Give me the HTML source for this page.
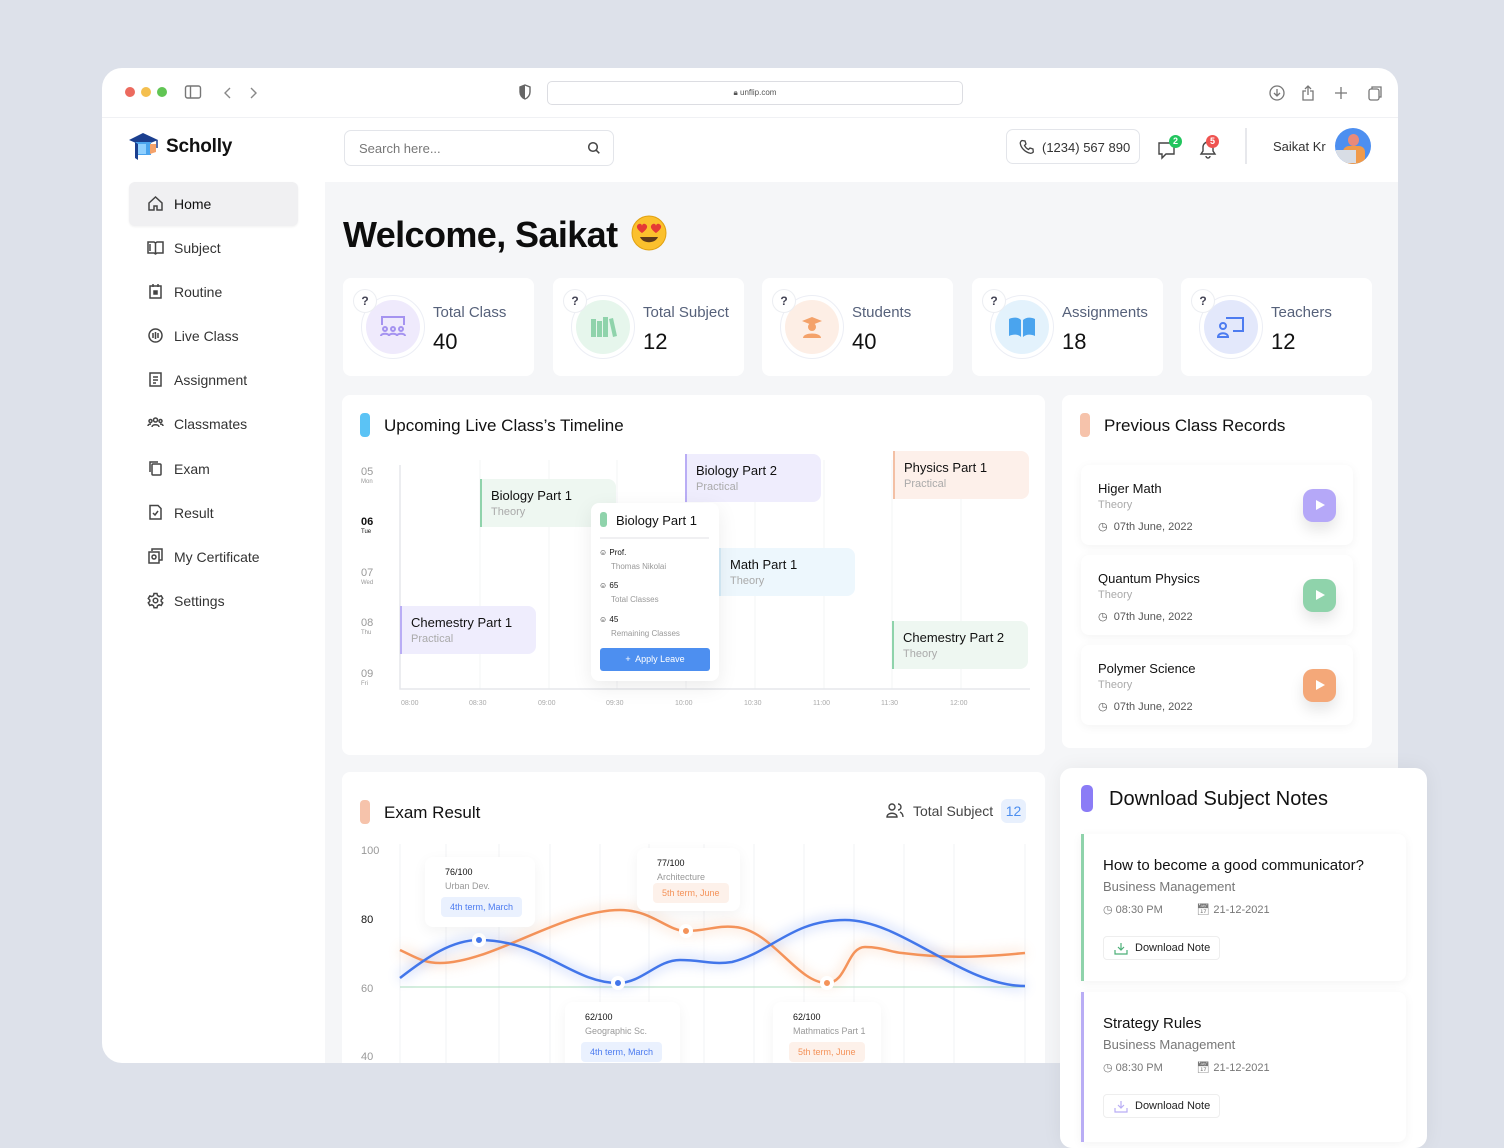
<!DOCTYPE html>
<html><head><meta charset="utf-8"><style>
*{box-sizing:border-box;margin:0;padding:0}
body{width:1504px;height:1128px;background:#dde1ea;font-family:"Liberation Sans",Arial,sans-serif;position:relative;overflow:hidden;color:#111}
.a{position:absolute}
.win{left:102px;top:68px;width:1296px;height:995px;background:#fff;border-radius:20px;overflow:hidden}
.main{left:325px;top:182px;width:1073px;height:881px;background:#f5f6f8}
.card{background:#fff;border-radius:8px}
.nav{position:absolute;left:147px;font-size:14px;color:#333;display:flex;align-items:center;gap:10px}
.nav svg{width:17px;height:17px;fill:none;stroke:#444;stroke-width:1.5}
.stat .q{position:absolute;left:10px;top:11px;width:24px;height:24px;border-radius:50%;background:#fff;border:1px solid #eceef2;font-size:12px;font-weight:bold;color:#445;text-align:center;line-height:22px;z-index:2}
.stat .ring{position:absolute;left:18px;top:17px;width:64px;height:64px;border-radius:50%;border:1px solid #eceef5}
.stat .ic{position:absolute;left:23px;top:22px;width:54px;height:54px;border-radius:50%;display:flex;align-items:center;justify-content:center}
.stat .t{position:absolute;left:90px;top:26px;font-size:15px;color:#56617a}
.stat .n{position:absolute;left:90px;top:51px;font-size:22px;color:#111}
.bar{width:10px;height:24px;border-radius:4px}
.h{font-size:17px;color:#111}
.blk{position:absolute;width:136px;height:48px;border-radius:0 8px 8px 0;padding:9px 0 0 9px;border-left:2px solid}
.blk b{display:block;font-weight:normal;font-size:13px;color:#111}
.blk i{font-style:normal;font-size:11px;color:#aaa;display:block;margin-top:3px}
.tl{font-size:7px;color:#aaa}
.day{position:absolute;left:361px;font-size:11px;color:#999}
.day s{text-decoration:none;display:block;font-size:6px;margin-top:1px}
.rec{position:absolute;left:1081px;width:272px;height:80px;background:#fff;border-radius:8px;box-shadow:0 2px 10px rgba(0,0,0,.05)}
.rec b{position:absolute;left:17px;top:16px;font-size:13px;font-weight:normal;color:#111}
.rec i{position:absolute;left:17px;top:34px;font-style:normal;font-size:11px;color:#aaa}
.rec span{position:absolute;left:17px;top:55px;font-size:11px;color:#555}
.rec .p{position:absolute;left:222px;top:24px;width:33px;height:33px;border-radius:10px;box-shadow:0 8px 14px rgba(0,0,0,.1)}
.rec .p:after{content:"";position:absolute;left:13px;top:11px;border-left:9px solid #fff;border-top:5.5px solid transparent;border-bottom:5.5px solid transparent}
.tip{position:absolute;background:#fff;border-radius:8px;box-shadow:0 4px 14px rgba(0,0,0,.05);font-size:9px}
.tip b{position:absolute;left:20px;top:10px;font-weight:normal;color:#111}
.tip i{position:absolute;left:20px;top:24px;font-style:normal;color:#999}
.tip span{position:absolute;left:16px;padding:5px 9px;border-radius:4px}
.note{position:absolute;left:1081px;width:325px;background:#fff;border-radius:0 8px 8px 0;box-shadow:0 2px 10px rgba(0,0,0,.05);border-left:3px solid}
.note b{position:absolute;left:19px;top:23px;font-size:15px;font-weight:normal;color:#111}
.note i{position:absolute;left:19px;top:45px;font-style:normal;font-size:13px;color:#777}
.note .m{position:absolute;left:19px;top:69px;font-size:11px;color:#777;width:200px}
.note .btn{position:absolute;left:19px;top:102px;width:117px;height:24px;border:1px solid #eee;border-radius:4px;font-size:11px;color:#222;padding:5px 0 0 31px}
</style></head><body>
<div class="a win">
  <div class="a" style="left:23px;top:19px;width:10px;height:10px;border-radius:50%;background:#ec6a5e"></div>
  <div class="a" style="left:39px;top:19px;width:10px;height:10px;border-radius:50%;background:#f4bf4f"></div>
  <div class="a" style="left:55px;top:19px;width:10px;height:10px;border-radius:50%;background:#61c554"></div>
  <svg class="a" style="left:82px;top:16px" width="80" height="18" fill="none" stroke="#777" stroke-width="1.4"><rect x="1.5" y="2" width="15" height="12" rx="2"/><line x1="6.5" y1="2" x2="6.5" y2="14"/><path d="M46 4l-5 5 5 5M67 4l5 5-5 5" stroke="#888"/></svg>
  <svg class="a" style="left:416px;top:16px" width="14" height="16"><path d="M7 1l5 2v5c0 3-2 6-5 7-3-1-5-4-5-7V3z" fill="none" stroke="#666" stroke-width="1.4"/><path d="M7 1v14c-3-1-5-4-5-7V3z" fill="#666"/></svg>
  <div class="a" style="left:445px;top:13px;width:416px;height:24px;border:1.5px solid #dcdde2;border-radius:5px;font-size:8px;color:#555;text-align:center;line-height:21px">🔒︎ unflip.com</div>
  <svg class="a" style="left:1166px;top:16px" width="120" height="18" fill="none" stroke="#777" stroke-width="1.3"><circle cx="9" cy="9" r="7"/><path d="M9 5v7M6 9l3 3 3-3"/><path d="M38 7h-3v9h10V7h-3M40 2v9M37 5l3-3 3 3"/><path d="M73 3v12M67 9h12"/><rect x="101" y="5" width="10" height="11" rx="2"/><path d="M104 5V3h9v10h-2"/></svg>
  <div class="a" style="left:0;top:49px;width:1296px;height:1px;background:#f0f1f4"></div>
  <svg class="a" style="left:26px;top:64px" width="32" height="30"><path d="M1 8L15 1l15 7-15 6z" fill="#1b3f8f"/><rect x="7" y="10" width="16" height="13" fill="#4aa4ee"/><rect x="10" y="12" width="8" height="10" fill="#8fd0ff"/><path d="M7 10v16l3 2V12z" fill="#1b3f8f"/><path d="M29 8v8" stroke="#1b3f8f" stroke-width="1.5"/><path d="M22 12v10l6-2V12z" fill="#f4a26a"/></svg>
  <div class="a" style="left:64px;top:68px;font-size:19px;font-weight:bold;color:#111;letter-spacing:-.2px">Scholly</div>
</div>
<div class="a" style="left:344px;top:130px;width:270px;height:36px;border:1px solid #e3e5ea;border-radius:7px;font-size:13px;color:#777;padding:10px 0 0 14px">Search here...</div>
<svg class="a" style="left:587px;top:141px" width="14" height="14" fill="none" stroke="#444" stroke-width="1.5"><circle cx="6" cy="6" r="4.3"/><path d="M9.3 9.3l3 3"/></svg>
<div class="a" style="left:1006px;top:129px;width:134px;height:35px;border:1px solid #e3e5ea;border-radius:7px;font-size:13px;color:#333;padding:10px 0 0 35px">(1234) 567 890</div>
<svg class="a" style="left:1019px;top:139px" width="15" height="15" fill="none" stroke="#444" stroke-width="1.3"><path d="M3 1.5l3 .5 1 3-1.5 1.5c1 2 2 3 4 4L11 9l3 1 .3 3c-1 1-2 1.5-3 1.3C6 13 2 9 1.3 4.5 1 3.5 2 2 3 1.5z"/></svg>
<svg class="a" style="left:1157px;top:139px" width="22" height="22" fill="none" stroke="#444" stroke-width="1.4"><path d="M2 4h15v11H9l-4 4v-4H2z"/></svg>
<div class="a" style="left:1169px;top:135px;width:13px;height:13px;border-radius:50%;background:#22c55e;color:#fff;font-size:9px;text-align:center;line-height:13px;font-weight:bold">2</div>
<svg class="a" style="left:1198px;top:138px" width="22" height="22" fill="none" stroke="#444" stroke-width="1.4"><path d="M3 16h14l-2-3V9a5 5 0 00-10 0v4zM8 18a2 2 0 004 0"/></svg>
<div class="a" style="left:1206px;top:135px;width:13px;height:13px;border-radius:50%;background:#ef5350;color:#fff;font-size:9px;text-align:center;line-height:13px;font-weight:bold">5</div>
<div class="a" style="left:1245px;top:128px;width:2px;height:36px;background:#e7e8ec"></div>
<div class="a" style="left:1273px;top:139px;font-size:13px;color:#333">Saikat Kr</div>
<div class="a" style="left:1335px;top:128px;width:36px;height:36px;border-radius:50%;background:#4d8ff0;overflow:hidden"><div class="a" style="left:13px;top:6px;width:11px;height:12px;border-radius:50%;background:#e98a7a"></div><div class="a" style="left:8px;top:18px;width:22px;height:18px;border-radius:6px;background:#f09a4a"></div><div class="a" style="left:1px;top:22px;width:20px;height:13px;background:#d8dde5"></div></div>
<div class="a" style="left:129px;top:182px;width:169px;height:44px;background:#f0f0f2;border-radius:6px;box-shadow:0 1px 2px rgba(0,0,0,.06)"></div>
<div class="nav" style="top:195px;color:#111"><svg viewBox="0 0 17 17"><path d="M2 8l6.5-6L15 8v7H10v-4H7v4H2z"/></svg>Home</div>
<div class="nav" style="top:239px"><svg viewBox="0 0 17 17"><path d="M1 3h6l1.5 1L10 3h6v11h-6l-1.5 1L7 14H1zM8.5 4v11M3 5v7"/></svg>Subject</div>
<div class="nav" style="top:283px"><svg viewBox="0 0 17 17"><rect x="3" y="3" width="11" height="12"/><path d="M6 1v3M11 1v3"/><rect x="7" y="8" width="3" height="3" fill="#444"/></svg>Routine</div>
<div class="nav" style="top:327px"><svg viewBox="0 0 17 17"><circle cx="8.5" cy="8.5" r="6.5"/><path d="M6 6v5M8.5 5v7M11 6v5"/></svg>Live Class</div>
<div class="nav" style="top:371px"><svg viewBox="0 0 17 17"><rect x="3" y="2" width="11" height="13"/><path d="M6 6h5M6 9h5M6 12h3"/></svg>Assignment</div>
<div class="nav" style="top:415px"><svg viewBox="0 0 17 17"><circle cx="8.5" cy="5" r="2"/><circle cx="3.5" cy="6" r="1.5"/><circle cx="13.5" cy="6" r="1.5"/><path d="M5 12c0-3 7-3 7 0M1 11c0-2 3-2 3-2M16 11c0-2-3-2-3-2"/></svg>Classmates</div>
<div class="nav" style="top:460px"><svg viewBox="0 0 17 17"><rect x="5" y="4" width="9" height="11" rx="1"/><path d="M3 12V2h8"/></svg>Exam</div>
<div class="nav" style="top:504px"><svg viewBox="0 0 17 17"><path d="M3 1.5h8l3 3V15H3z"/><path d="M6 9l2 2 3-4"/></svg>Result</div>
<div class="nav" style="top:548px"><svg viewBox="0 0 17 17"><path d="M5 3V1h10v11h-3"/><rect x="2" y="4" width="10" height="11"/><circle cx="7" cy="9" r="2"/></svg>My Certificate</div>
<div class="nav" style="top:592px"><svg viewBox="0 0 17 17"><circle cx="8.5" cy="8.5" r="2.3"/><path d="M7 1.5h3l.5 2 1.7 1 2-.7 1.5 2.6-1.5 1.4v1.6l1.5 1.4-1.5 2.6-2-.7-1.7 1-.5 2H7l-.5-2-1.7-1-2 .7-1.5-2.6 1.5-1.4V7.9L1.3 6.5l1.5-2.6 2 .7 1.7-1z"/></svg>Settings</div>

<div class="a main"></div>
<div class="a" style="left:343px;top:214px;font-size:36px;font-weight:bold;color:#0d0d0d;letter-spacing:-.6px">Welcome, Saikat</div>
<svg class="a" style="left:631px;top:215px" width="36" height="36"><circle cx="18" cy="18" r="17" fill="#fbc02d"/><circle cx="18" cy="18" r="17" fill="none" stroke="#e0a010"/><path d="M6 11c1-3 5-3 5 0 0-3 4-3 5 0 1 3-5 7-5 7s-6-4-5-7zM20 11c1-3 5-3 5 0 0-3 4-3 5 0 1 3-5 7-5 7s-6-4-5-7z" fill="#e53935"/><path d="M9 22c3 7 15 7 18 0z" fill="#5d3a1a"/></svg>

<div class="a card stat" style="left:343px;top:278px;width:191px;height:98px"><div class="q">?</div><div class="ring"></div><div class="ic" style="background:#efeafc"><svg width="30" height="24" fill="none" stroke="#a593f0" stroke-width="2"><path d="M4 10V2h22v8"/><circle cx="7" cy="14" r="2"/><circle cx="15" cy="14" r="2"/><circle cx="23" cy="14" r="2"/><path d="M3 21c0-3 8-3 8 0M11 21c0-3 8-3 8 0M19 21c0-3 8-3 8 0"/></svg></div><div class="t">Total Class</div><div class="n">40</div></div>
<div class="a card stat" style="left:553px;top:278px;width:191px;height:98px"><div class="q">?</div><div class="ring"></div><div class="ic" style="background:#e6f6ec"><svg width="28" height="24" fill="#8fd3ab"><rect x="2" y="4" width="5" height="18"/><rect x="8" y="6" width="5" height="16"/><rect x="14" y="2" width="5" height="20"/><path d="M20 4l4-1 4 18-4 1z"/></svg></div><div class="t">Total Subject</div><div class="n">12</div></div>
<div class="a card stat" style="left:762px;top:278px;width:191px;height:98px"><div class="q">?</div><div class="ring"></div><div class="ic" style="background:#fdeee5"><svg width="24" height="24" fill="#f4a26a"><path d="M2 6l10-4 10 4-10 4z"/><circle cx="12" cy="12" r="4"/><path d="M3 23c0-6 18-6 18 0z"/></svg></div><div class="t">Students</div><div class="n">40</div></div>
<div class="a card stat" style="left:972px;top:278px;width:191px;height:98px"><div class="q">?</div><div class="ring"></div><div class="ic" style="background:#e3f2fc"><svg width="28" height="22" fill="#4aa4ee"><path d="M1 3c4-2 9-2 12 1v17c-3-3-8-3-12-1zM27 3c-4-2-9-2-12 1v17c3-3 8-3 12-1z"/></svg></div><div class="t">Assignments</div><div class="n">18</div></div>
<div class="a card stat" style="left:1181px;top:278px;width:191px;height:98px"><div class="q">?</div><div class="ring"></div><div class="ic" style="background:#e3e8fb"><svg width="28" height="24" fill="none" stroke="#4d7cf0" stroke-width="2"><path d="M9 3h17v13h-9"/><circle cx="6" cy="11" r="3"/><path d="M1 22c0-5 10-5 10 0zM16 16h6"/></svg></div><div class="t">Teachers</div><div class="n">12</div></div>

<div class="a card" style="left:342px;top:395px;width:703px;height:360px"></div>
<div class="a bar" style="left:360px;top:413px;background:#5bc3f5"></div>
<div class="a h" style="left:384px;top:416px">Upcoming Live Class’s Timeline</div>
<div class="day" style="top:466px">05<s>Mon</s></div>
<div class="day" style="top:516px;color:#111;font-weight:bold">06<s style="font-weight:normal">Tue</s></div>
<div class="day" style="top:567px">07<s>Wed</s></div>
<div class="day" style="top:617px">08<s>Thu</s></div>
<div class="day" style="top:668px">09<s>Fri</s></div>
<svg class="a" style="left:398px;top:460px" width="640" height="235"><g stroke="#f3f4f6"><path d="M82 0v229M151 0v229M219 0v229M288 0v229M357 0v229M426 0v229M494 0v229M563 0v229"/></g><path d="M2 5v224h630" stroke="#e6e7eb" stroke-width="1.5" fill="none"/></svg>
<div class="a tl" style="left:401px;top:700px">08:00</div><div class="a tl" style="left:469px;top:700px">08:30</div><div class="a tl" style="left:538px;top:700px">09:00</div><div class="a tl" style="left:606px;top:700px">09:30</div><div class="a tl" style="left:675px;top:700px">10:00</div><div class="a tl" style="left:744px;top:700px">10:30</div><div class="a tl" style="left:813px;top:700px">11:00</div><div class="a tl" style="left:881px;top:700px">11:30</div><div class="a tl" style="left:950px;top:700px">12:00</div>
<div class="blk" style="left:480px;top:479px;background:#eef7f1;border-color:#8fd3ab"><b>Biology Part 1</b><i>Theory</i></div>
<div class="blk" style="left:685px;top:454px;background:#efedfd;border-color:#b9adf5"><b>Biology Part 2</b><i>Practical</i></div>
<div class="blk" style="left:893px;top:451px;background:#fdf0ea;border-color:#f3c0a5"><b>Physics Part 1</b><i>Practical</i></div>
<div class="blk" style="left:719px;top:548px;background:#edf7fd;border-color:#d5ecf9"><b>Math Part 1</b><i>Theory</i></div>
<div class="blk" style="left:400px;top:606px;background:#efedfd;border-color:#b9adf5"><b>Chemestry Part 1</b><i>Practical</i></div>
<div class="blk" style="left:892px;top:621px;background:#eef7f1;border-color:#8fd3ab"><b>Chemestry Part 2</b><i>Theory</i></div>
<div class="a" style="left:591px;top:503px;width:128px;height:178px;background:#fff;border-radius:8px;box-shadow:0 6px 20px rgba(0,0,0,.08);font-size:8px">
  <div class="a" style="left:9px;top:9px;width:7px;height:15px;border-radius:3px;background:#8fd3ab"></div>
  <div class="a" style="left:25px;top:10px;font-size:13px;color:#111">Biology Part 1</div>
  <div class="a" style="left:9px;top:34px;width:109px;height:2px;background:#f0f0f2"></div>
  <div class="a" style="left:8px;top:45px;color:#111">&#9786;&#xFE0E; Prof.</div><div class="a" style="left:20px;top:59px;color:#999">Thomas Nikolai</div>
  <div class="a" style="left:8px;top:78px;color:#111">&#9786;&#xFE0E; 65</div><div class="a" style="left:20px;top:92px;color:#999">Total Classes</div>
  <div class="a" style="left:8px;top:112px;color:#111">&#9786;&#xFE0E; 45</div><div class="a" style="left:20px;top:126px;color:#999">Remaining Classes</div>
  <div class="a" style="left:9px;top:145px;width:110px;height:23px;background:#4d8ff0;border-radius:3px;color:#fff;text-align:center;line-height:23px;font-size:9px">+&nbsp; Apply Leave</div>
</div>

<div class="a card" style="left:1062px;top:395px;width:310px;height:353px"></div>
<div class="a bar" style="left:1080px;top:413px;background:#f6c3ab"></div>
<div class="a h" style="left:1104px;top:416px">Previous Class Records</div>
<div class="rec" style="top:465px"><b>Higer Math</b><i>Theory</i><span>&#9719;&nbsp; 07th June, 2022</span><div class="p" style="background:#b5a8f8"></div></div>
<div class="rec" style="top:555px"><b>Quantum Physics</b><i>Theory</i><span>&#9719;&nbsp; 07th June, 2022</span><div class="p" style="background:#8fd3ab"></div></div>
<div class="rec" style="top:645px"><b>Polymer Science</b><i>Theory</i><span>&#9719;&nbsp; 07th June, 2022</span><div class="p" style="background:#f4a879"></div></div>

<div class="a" style="left:342px;top:772px;width:703px;height:291px;background:#fff;border-radius:8px 8px 0 0;overflow:hidden">
<div class="a bar" style="left:18px;top:28px;background:#f6c3ab"></div>
<div class="a h" style="left:42px;top:31px">Exam Result</div>
<svg class="a" style="left:544px;top:30px" width="18" height="18" fill="none" stroke="#444" stroke-width="1.4"><circle cx="6" cy="5" r="3"/><path d="M1 15c0-5 10-5 10 0z"/><path d="M12 2a3 3 0 010 6M14 10c2 1 3 3 3 5"/></svg>
<div class="a" style="left:571px;top:31px;font-size:14px;color:#444">Total Subject</div>
<div class="a" style="left:659px;top:27px;width:25px;height:24px;border-radius:6px;background:#e8f0fd;color:#4d8ff0;font-size:14px;text-align:center;line-height:24px">12</div>
<div class="a" style="left:19px;top:73px;font-size:11px;color:#999">100</div>
<div class="a" style="left:19px;top:142px;font-size:11px;color:#111">80</div>
<div class="a" style="left:19px;top:211px;font-size:11px;color:#999">60</div>
<div class="a" style="left:19px;top:279px;font-size:11px;color:#999">40</div>
<svg class="a" style="left:0;top:0" width="703" height="291">
<defs><filter id="f" x="-10%" y="-50%" width="120%" height="200%"><feGaussianBlur stdDeviation="6"/></filter></defs>
<g stroke="#f2f3f5"><path d="M58 72v220M104 72v220M157 72v220M208 72v220M258 72v220M307 72v220M362 72v220M412 72v220M462 72v220M512 72v220M562 72v220M612 72v220M683 72v220"/></g>
<path d="M58 215h625" stroke="#a9dcbd" stroke-width="1"/>
<g id="o"><path d="M58 178C75 186 82 191 98 191C150 191 220 138 278 138C310 138 325 159 344 159C365 159 375 153 393 155C430 158 455 211 485 211C505 211 505 175 523 175C540 175 548 180 560 181C600 186 630 186 683 181" fill="none"/></g>
<path d="M58 178C75 186 82 191 98 191C150 191 220 138 278 138C310 138 325 159 344 159C365 159 375 153 393 155C430 158 455 211 485 211C505 211 505 175 523 175C540 175 548 180 560 181C600 186 630 186 683 181" fill="none" stroke="#f4a26a" stroke-width="8" opacity=".25" filter="url(#f)"/>
<path d="M58 206C85 185 110 168 137 168C200 168 230 211 276 211C300 211 315 188 338 188C360 188 370 193 390 190C430 180 450 148 503 148C560 148 620 214 683 214" fill="none" stroke="#4d7cf0" stroke-width="8" opacity=".25" filter="url(#f)"/>
<path d="M58 178C75 186 82 191 98 191C150 191 220 138 278 138C310 138 325 159 344 159C365 159 375 153 393 155C430 158 455 211 485 211C505 211 505 175 523 175C540 175 548 180 560 181C600 186 630 186 683 181" fill="none" stroke="#f4935a" stroke-width="2.5"/>
<path d="M58 206C85 185 110 168 137 168C200 168 230 211 276 211C300 211 315 188 338 188C360 188 370 193 390 190C430 180 450 148 503 148C560 148 620 214 683 214" fill="none" stroke="#4276ea" stroke-width="2.5"/>
<g stroke="#fff" stroke-width="4"><circle cx="137" cy="168" r="5" fill="#4276ea"/><circle cx="276" cy="211" r="5" fill="#4276ea"/><circle cx="344" cy="159" r="5" fill="#f4935a"/><circle cx="485" cy="211" r="5" fill="#f4935a"/></g>
</svg>
<div class="tip" style="left:83px;top:85px;width:110px;height:70px"><b>76/100</b><i>Urban Dev.</i><span style="top:40px;background:#eaf1fe;color:#4d7cf0">4th term, March</span></div>
<div class="tip" style="left:295px;top:76px;width:103px;height:63px"><b>77/100</b><i>Architecture</i><span style="top:35px;background:#fdf1ea;color:#f4935a">5th term, June</span></div>
<div class="tip" style="left:223px;top:230px;width:115px;height:70px"><b>62/100</b><i>Geographic Sc.</i><span style="top:40px;background:#eaf1fe;color:#4d7cf0">4th term, March</span></div>
<div class="tip" style="left:431px;top:230px;width:108px;height:70px"><b>62/100</b><i>Mathmatics Part 1</i><span style="top:40px;background:#fdf1ea;color:#f4935a">5th term, June</span></div>
</div>

<div class="a" style="left:1060px;top:768px;width:367px;height:380px;background:#fff;border-radius:12px;box-shadow:0 0 20px rgba(0,0,0,.06)"></div>
<div class="a" style="left:1081px;top:785px;width:12px;height:27px;border-radius:5px;background:#8b7cf6"></div>
<div class="a" style="left:1109px;top:788px;font-size:20px;color:#111">Download Subject Notes</div>
<div class="note" style="top:834px;height:147px;border-color:#8fd3ab"><b>How to become a good communicator?</b><i>Business Management</i><div class="m">&#9719; 08:30 PM &nbsp;&nbsp;&nbsp;&nbsp;&nbsp;&nbsp;&nbsp;&nbsp;&nbsp; &#128197;&#xFE0E; 21-12-2021</div><div class="btn">Download Note<svg class="a" style="left:10px;top:5px" width="14" height="13" fill="none" stroke="#4caf78" stroke-width="1.2"><path d="M7 1v7M4 5l3 3 3-3M1 8v4h12V8"/></svg></div></div>
<div class="note" style="top:992px;height:150px;border-color:#b9adf5"><b>Strategy Rules</b><i>Business Management</i><div class="m">&#9719; 08:30 PM &nbsp;&nbsp;&nbsp;&nbsp;&nbsp;&nbsp;&nbsp;&nbsp;&nbsp; &#128197;&#xFE0E; 21-12-2021</div><div class="btn">Download Note<svg class="a" style="left:10px;top:5px" width="14" height="13" fill="none" stroke="#b9adf5" stroke-width="1.2"><path d="M7 1v7M4 5l3 3 3-3M1 8v4h12V8"/></svg></div></div>
</body></html>
